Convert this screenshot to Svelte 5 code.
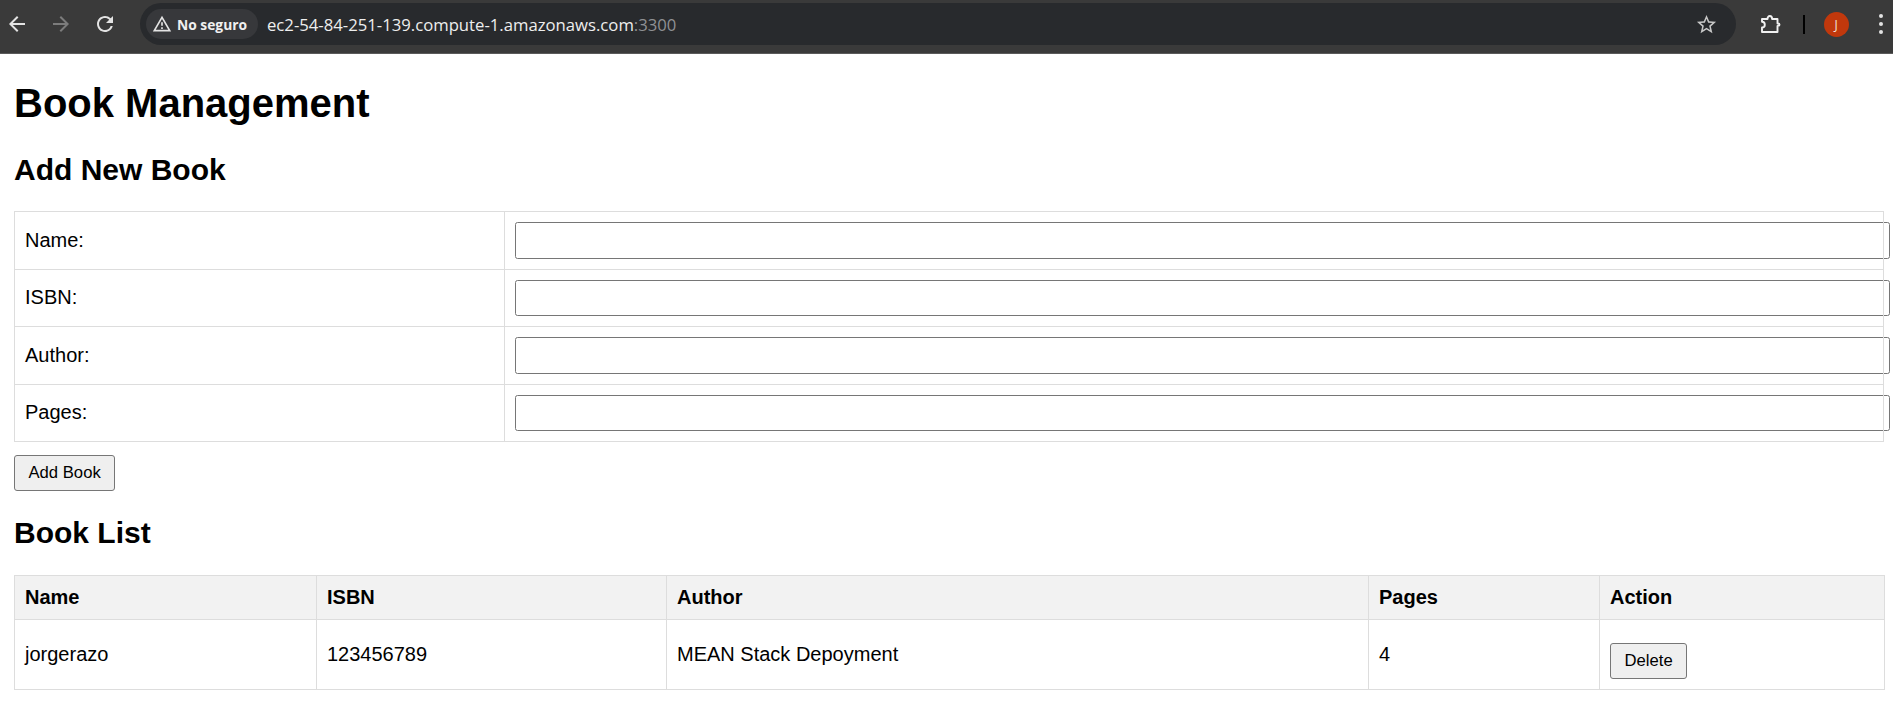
<script>
	const fields = ['Name', 'ISBN', 'Author', 'Pages'];
	const columns = [
		{ label: 'Name', width: 302 },
		{ label: 'ISBN', width: 350 },
		{ label: 'Author', width: 702 },
		{ label: 'Pages', width: 231 },
		{ label: 'Action', width: 285 }
	];

	let draft = $state({ Name: '', ISBN: '', Author: '', Pages: '' });
	let books = $state([
		{ Name: 'jorgerazo', ISBN: '123456789', Author: 'MEAN Stack Depoyment', Pages: '4' }
	]);

	function addBook() {
		books.push({ ...draft });
		draft = { Name: '', ISBN: '', Author: '', Pages: '' };
	}

	function removeBook(index) {
		books.splice(index, 1);
	}
</script>

<header class="toolbar">
	<nav class="nav">
		<button class="nav-btn" aria-label="Back">
			<svg viewBox="0 0 24 24" width="24" height="24"><path fill="#e3e3e3" d="M20 11H7.83l5.59-5.59L12 4l-8 8 8 8 1.41-1.41L7.83 13H20v-2z" /></svg>
		</button>
		<button class="nav-btn" aria-label="Forward">
			<svg viewBox="0 0 24 24" width="24" height="24"><path fill="#7c7c7c" d="M4 11h12.17l-5.59-5.59L12 4l8 8-8 8-1.41-1.41L16.17 13H4v-2z" /></svg>
		</button>
		<button class="nav-btn" aria-label="Reload">
			<svg viewBox="0 0 24 24" width="24" height="24"><path fill="#e3e3e3" d="M17.65 6.35A7.958 7.958 0 0 0 12 4c-4.42 0-7.99 3.58-7.99 8s3.57 8 7.99 8c3.73 0 6.84-2.55 7.73-6h-2.08A5.99 5.99 0 0 1 12 18c-3.31 0-6-2.69-6-6s2.69-6 6-6c1.66 0 3.14.69 4.22 1.78L13 11h7V4l-2.35 2.35z" /></svg>
		</button>
	</nav>
	<div class="omnibox">
		<div class="chip">
			<svg viewBox="0 0 24 24" width="20" height="20"><path fill="#e3e3e3" d="M12 5.99L19.53 19H4.47L12 5.99M12 2L1 21h22L12 2zm1 14h-2v2h2v-2zm0-6h-2v4h2v-4z" /></svg>
			<span>No seguro</span>
		</div>
		<div class="url">ec2-54-84-251-139.compute-1.amazonaws.com<span class="port">:3300</span></div>
		<svg class="star" viewBox="0 0 24 24" width="23" height="23"><path fill="#c7c7c7" d="M22 9.24l-7.19-.62L12 2 9.19 8.63 2 9.24l5.46 4.73L5.82 21 12 17.27 18.18 21l-1.63-7.03L22 9.24zM12 15.4l-3.76 2.27 1-4.28-3.32-2.88 4.38-.38L12 6.1l1.71 4.04 4.38.38-3.32 2.88 1 4.28L12 15.4z" /></svg>
	</div>
	<div class="actions">
		<svg viewBox="0 0 24 24" width="24" height="24"><path fill="none" stroke="#f1f1f1" stroke-width="1.9" stroke-linejoin="round" d="M4 7h5.500c0-1.800 1-3 2.300-3s2.300 1.200 2.300 3h5.400v4.500c1.500 0 2 .5 2 1.200s-.5 1.200-2 1.200V20H4v-4.500c1.600 0 2.800-.9 2.800-2.800S5.600 9.800 4 9.800z" /></svg>
		<div class="divider"></div>
		<div class="avatar">J</div>
		<div class="menu"><i></i><i></i><i></i></div>
	</div>
</header>

<main class="page">
	<h1>Book Management</h1>

	<h2>Add New Book</h2>
	<table class="form-table">
		<tbody>
			{#each fields as field}
				<tr>
					<td class="label">{field}:</td>
					<td><input type="text" bind:value={draft[field]} /></td>
				</tr>
			{/each}
		</tbody>
	</table>
	<button class="btn add" onclick={addBook}>Add Book</button>

	<h2>Book List</h2>
	<table class="list-table">
		<colgroup>
			{#each columns as col}
				<col style="width: {col.width}px" />
			{/each}
		</colgroup>
		<thead>
			<tr>
				{#each columns as col}
					<th>{col.label}</th>
				{/each}
			</tr>
		</thead>
		<tbody>
			{#each books as book, i}
				<tr>
					<td>{book.Name}</td>
					<td>{book.ISBN}</td>
					<td>{book.Author}</td>
					<td>{book.Pages}</td>
					<td><button class="btn delete" onclick={() => removeBook(i)}>Delete</button></td>
				</tr>
			{/each}
		</tbody>
	</table>
</main>

<style>
	:global(body) {
		background: #fff;
		overflow: hidden;
	}

	.toolbar {
		display: flex;
		align-items: center;
		height: 54px;
		box-sizing: border-box;
		padding-bottom: 5px;
		background: #3a3a3a;
		border-bottom: 1px solid #5a5a5a;
		font-family: 'Open Sans', 'Liberation Sans', sans-serif;
	}

	.nav {
		display: flex;
		align-items: center;
		padding-left: 5px;
		gap: 20px;
		width: 140px;
		box-sizing: border-box;
	}

	.nav-btn {
		display: flex;
		padding: 0;
		border: 0;
		background: none;
	}

	.omnibox {
		display: flex;
		align-items: center;
		width: 1596px;
		height: 42px;
		box-sizing: border-box;
		padding: 0 6px;
		border-radius: 21px;
		background: #282a2d;
	}

	.chip {
		display: flex;
		align-items: center;
		gap: 5px;
		width: 112px;
		height: 30px;
		box-sizing: border-box;
		padding-left: 6px;
		border-radius: 15px;
		background: #37383b;
		color: #f0f0f0;
		font-size: 13.8px;
		font-weight: 700;
	}

	.url {
		margin-left: 9px;
		flex: 1;
		color: #eee;
		font-size: 16.7px;
	}

	.port {
		color: #8f9194;
	}

	.star {
		margin-right: 12px;
	}

	.actions {
		display: flex;
		align-items: center;
		padding-left: 22px;
	}

	.divider {
		width: 1.5px;
		height: 19px;
		margin-left: 21px;
		background: #000;
	}

	.avatar {
		width: 25px;
		height: 25px;
		margin-left: 19px;
		border-radius: 50%;
		background: #c1380c;
		color: #f5e4dc;
		font-size: 12px;
		line-height: 25px;
		text-align: center;
	}

	.menu {
		display: flex;
		flex-direction: column;
		gap: 4px;
		margin-left: 30px;
	}

	.menu i {
		width: 4px;
		height: 4px;
		border-radius: 50%;
		background: #e3e3e3;
	}

	.page {
		padding: 27px 0 0 14px;
		width: 1870px;
		box-sizing: content-box;
		color: #000;
		font-family: 'Liberation Sans', Arial, sans-serif;
		font-size: 20px;
	}

	h1 {
		margin: 0 0 27px;
		font-size: 40px;
		font-weight: 700;
	}

	h2 {
		margin: 25px 0;
		font-size: 30px;
		font-weight: 700;
	}

	table {
		width: 100%;
		border-collapse: collapse;
		table-layout: fixed;
	}

	.form-table {
		margin-top: -1px;
	}

	td,
	th {
		padding: 10px;
		border: 1px solid #ddd;
		text-align: left;
	}

	th {
		background: #f2f2f2;
	}

	.label {
		width: 469px;
	}

	input {
		display: block;
		height: 36.5px;
		box-sizing: border-box;
		width: calc(100% + 17px);
		padding: 0 7px;
		border: 1px solid #767676;
		border-radius: 2.5px;
		background: #fff;
		font-size: 16.67px;
	}

	.btn {
		height: 36px;
		margin-top: 12.5px;
		padding: 0 13.5px;
		border: 1px solid #767676;
		border-radius: 3px;
		background: #efefef;
		color: #000;
		font-family: 'Liberation Sans', Arial, sans-serif;
		font-size: 16.67px;
	}

	.add {
		display: block;
	}

	.delete {
		margin-top: 13.5px;
	}
</style>
